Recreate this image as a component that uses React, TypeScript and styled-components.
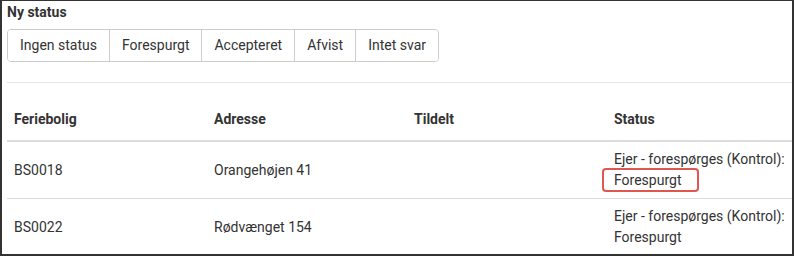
import React from 'react'
import styled, { createGlobalStyle } from 'styled-components'

const GlobalStyle = createGlobalStyle`
  html, body {
    margin: 0;
    padding: 0;
    background: #fff;
  }
  body {
    font-family: Roboto, "Liberation Sans", Arial, sans-serif;
    color: #333;
  }
`

const Frame = styled.div`
  box-sizing: border-box;
  width: 794px;
  height: 256px;
  overflow: hidden;
  border-style: solid;
  border-color: #333;
  border-width: 1px 2px 2px 2px;
  padding: 1px 0 0 5px;
  background: #fff;
`

const Title = styled.div`
  font-size: 14px;
  font-weight: 700;
  line-height: 20px;
  color: #333;
`

const ButtonGroup = styled.div`
  display: inline-flex;
  margin-top: 7px;
  border: 1px solid #ccc;
  border-radius: 4px;
  overflow: hidden;
`

const GroupButton = styled.button`
  font-family: inherit;
  font-size: 14px;
  line-height: 19px;
  color: #333;
  background: #fff;
  border: none;
  border-left: 1px solid #ccc;
  padding: 6px 12px;
  margin: 0;
  cursor: pointer;

  &:first-child {
    border-left: none;
  }
`

const Divider = styled.div`
  margin-top: 20px;
  height: 1px;
  background: #e6e6e6;
`

const Table = styled.table`
  margin-top: 18px;
  width: 785px;
  border-collapse: collapse;
  table-layout: fixed;
  font-size: 14px;
  line-height: 21px;
`

const Th = styled.th<{ $w?: number }>`
  width: ${({ $w }) => ($w ? `${$w}px` : 'auto')};
  text-align: left;
  font-weight: 700;
  padding: 8px 7px 10px;
  border-bottom: 2px solid #ddd;
  box-sizing: border-box;
`

const Td = styled.td`
  padding: 7px 7px;
  vertical-align: middle;
  border-bottom: 1px solid #ddd;
`

const StatusLine = styled.div`
  white-space: nowrap;
`

// annotation frame drawn over the status text
const Highlight = styled.span`
  position: relative;

  &::after {
    content: '';
    position: absolute;
    left: -12px;
    right: -18px;
    top: -4px;
    bottom: -4px;
    border: 2px solid #e0574f;
    border-radius: 4px;
  }
`

const statuses = ['Ingen status', 'Forespurgt', 'Accepteret', 'Afvist', 'Intet svar']

const rows = [
  { id: 'BS0018', address: 'Orangehøjen 41', status: 'Forespurgt', marked: true },
  { id: 'BS0022', address: 'Rødvænget 154', status: 'Forespurgt', marked: false },
]

const App: React.FC = () => {
  return (
    <>
      <GlobalStyle />
      <Frame>
        <Title>Ny status</Title>
        <ButtonGroup>
          {statuses.map((s) => (
            <GroupButton key={s} type="button">
              {s}
            </GroupButton>
          ))}
        </ButtonGroup>
        <Divider />
        <Table>
          <thead>
            <tr>
              <Th $w={200}>Feriebolig</Th>
              <Th $w={200}>Adresse</Th>
              <Th $w={200}>Tildelt</Th>
              <Th>Status</Th>
            </tr>
          </thead>
          <tbody>
            {rows.map((r) => (
              <tr key={r.id}>
                <Td>{r.id}</Td>
                <Td>{r.address}</Td>
                <Td />
                <Td>
                  <StatusLine>Ejer - forespørges (Kontrol):</StatusLine>
                  <StatusLine>{r.marked ? <Highlight>{r.status}</Highlight> : r.status}</StatusLine>
                </Td>
              </tr>
            ))}
          </tbody>
        </Table>
      </Frame>
    </>
  )
}

export default App
